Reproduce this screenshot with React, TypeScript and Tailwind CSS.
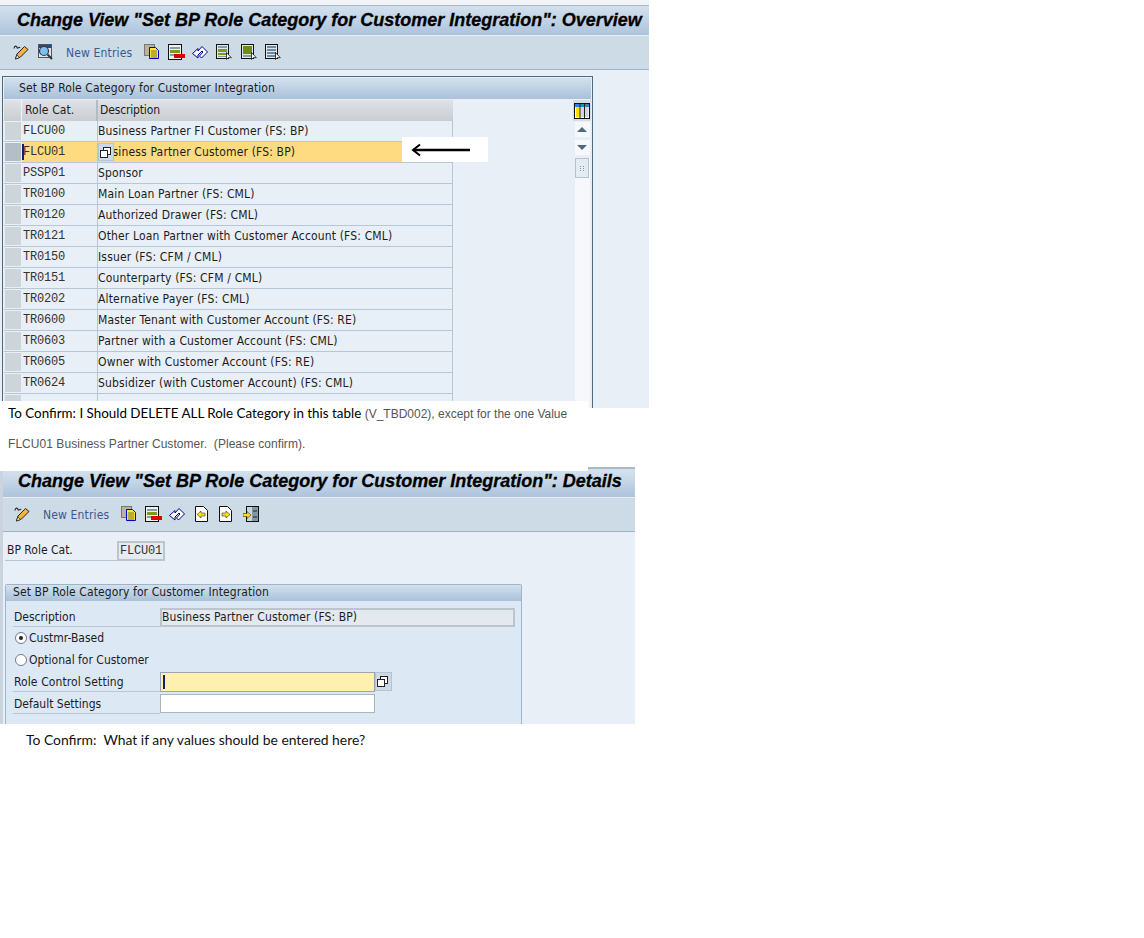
import React from "react";

const UI = "font-['DejaVu_Sans_Condensed','DejaVu_Sans',sans-serif]";

const rows = [
  ["FLCU00", "Business Partner FI Customer (FS: BP)"],
  ["FLCU01", "Business Partner Customer (FS: BP)"],
  ["PSSP01", "Sponsor"],
  ["TR0100", "Main Loan Partner (FS: CML)"],
  ["TR0120", "Authorized Drawer (FS: CML)"],
  ["TR0121", "Other Loan Partner with Customer Account (FS: CML)"],
  ["TR0150", "Issuer (FS: CFM / CML)"],
  ["TR0151", "Counterparty (FS: CFM / CML)"],
  ["TR0202", "Alternative Payer (FS: CML)"],
  ["TR0600", "Master Tenant with Customer Account (FS: RE)"],
  ["TR0603", "Partner with a Customer Account (FS: CML)"],
  ["TR0605", "Owner with Customer Account (FS: RE)"],
  ["TR0624", "Subsidizer (with Customer Account) (FS: CML)"],
  ["", ""],
];

function Svg({ w = 16, h = 16, children }: { w?: number; h?: number; children: React.ReactNode }) {
  return (
    <svg width={w} height={h} viewBox={`0 0 ${w} ${h}`} className="block shrink-0">
      {children}
    </svg>
  );
}

function PencilIcon() {
  return (
    <Svg>
      <path d="M1 4.500c.5-3 2.500-3 3-1s2-1.500 3 .5" fill="none" stroke="#333" strokeWidth="1.200" />
      <path d="M2.500 15l1.500-5L11.500 2.500l3.500 3L7.500 13z" fill="#f5b53a" stroke="#222" strokeWidth="1" />
      <path d="M2.500 15l1.200-4 2.800 2.500z" fill="#fff" stroke="#222" strokeWidth=".8" />
    </Svg>
  );
}

function MagnifierIcon() {
  return (
    <Svg>
      <rect x="1.500" y="0.500" width="13" height="13" fill="#dfe7ee" stroke="#555" />
      <rect x="2" y="1" width="12" height="3" fill="#16518f" />
      <circle cx="7" cy="7" r="4.500" fill="#7cc0f0" stroke="#334" strokeWidth="1.200" />
      <path d="M10.500 10.500l4.500 4.500" stroke="#333" strokeWidth="2" />
    </Svg>
  );
}

function CopyIcon() {
  return (
    <Svg>
      <rect x="0.500" y="0.500" width="10" height="11" fill="#b8b49c" stroke="#777" />
      <path d="M5.500 3.500h6l3 3v8h-9z" fill="#ffe23a" stroke="#0000c8" />
      <path d="M7 7h6M7 9h6M7 11h6M7 13h6" stroke="#7a7a20" />
    </Svg>
  );
}

function DeleteIcon() {
  return (
    <Svg w={17}>
      <rect x="0.500" y="0.500" width="13" height="15" fill="#eef2f5" stroke="#111" />
      <rect x="2" y="3" width="10" height="2" fill="#8a9aa6" />
      <rect x="2" y="6" width="10" height="3" fill="#7c9a1e" />
      <rect x="2" y="10" width="10" height="2" fill="#8a9aa6" />
      <rect x="6" y="10" width="11" height="4" fill="#e00000" />
    </Svg>
  );
}

function UndoIcon() {
  return (
    <Svg>
      <path d="M.5 9.500L6 4.500V7L10 2.500 15.500 8 9.500 14 7.500 12 11 8 10 7 6 11v3z" fill="#fff" stroke="#00008c" strokeWidth="1" strokeLinejoin="miter" />
    </Svg>
  );
}

function SelectIcon({ kind }: { kind: "block" | "all" | "none" }) {
  return (
    <Svg>
      <rect x="0.500" y="0.500" width="12" height="14" fill="#dfe8ee" stroke="#111" />
      {kind === "block" && (
        <>
          <rect x="2" y="2" width="9" height="2" fill="#8a9aa6" />
          <rect x="2" y="5" width="9" height="3" fill="#7d9a1a" />
          <rect x="2" y="9" width="9" height="2" fill="#7d9a1a" />
          <rect x="2" y="12" width="9" height="1" fill="#8a9aa6" />
        </>
      )}
      {kind === "all" && <rect x="2" y="2" width="9" height="8" fill="#6f8d12" />}
      {kind === "all" && <rect x="2" y="11" width="9" height="2" fill="#8a9aa6" />}
      {kind === "none" && (
        <>
          <rect x="2" y="2" width="9" height="2" fill="#6b8aa0" />
          <rect x="2" y="5" width="9" height="2" fill="#6b8aa0" />
          <rect x="2" y="8" width="9" height="2" fill="#6b8aa0" />
          <rect x="2" y="11" width="9" height="2" fill="#6b8aa0" />
        </>
      )}
      <path d="M10.500 8.500v7l1.800-1.800h3z" fill="#fff" stroke="#111" strokeWidth=".8" />
    </Svg>
  );
}

function PageArrowIcon({ dir }: { dir: "left" | "right" }) {
  return (
    <Svg w={13}>
      <path d="M.5.500h8l4 4v11H.5z" fill="#fff" stroke="#111" />
      {dir === "left" ? (
        <path d="M2 8.500l4-3.500v2h4v3H6v2z" fill="#ffe000" stroke="#333" strokeWidth=".6" />
      ) : (
        <path d="M11 8.500L7 5v2H3v3h4v2z" fill="#ffe000" stroke="#333" strokeWidth=".6" />
      )}
    </Svg>
  );
}

function OtherIcon() {
  return (
    <Svg>
      <rect x="3.500" y="0.500" width="12" height="15" fill="#c9d6de" stroke="#111" />
      <rect x="9" y="1" width="6" height="14" fill="#8496a3" />
      <path d="M10 5h4M10 11h4" stroke="#222" />
      <path d="M0 7.500h4v-2l4 3.500-4 3.500v-2H0z" fill="#ffe000" stroke="#333" strokeWidth=".6" />
    </Svg>
  );
}

function F4Button({ className }: { className: string }) {
  return (
    <div className={`flex items-center justify-center pr-[2px] bg-[#cdd9e6] border border-[#b6c3d0] ${className}`}>
      <svg width="11" height="11" viewBox="0 0 11 11" className="block">
        <rect x="3.500" y="0.500" width="7" height="7" fill="#fff" stroke="#222" />
        <rect x="0.500" y="3.500" width="7" height="7" fill="#fff" stroke="#222" />
      </svg>
    </div>
  );
}

function TitleText({ children, className }: { children: React.ReactNode; className: string }) {
  return (
    <span className={`font-['Liberation_Sans',sans-serif] font-bold italic text-[18px] text-black whitespace-pre leading-none [-webkit-text-stroke:0.3px_black] ${className}`}>
      {children}
    </span>
  );
}

function NewEntries() {
  return <span className={`${UI} text-[12px] text-[#3a5a8c] whitespace-pre tracking-[0.15px]`}>New Entries</span>;
}

function OverviewTable() {
  return (
    <div className="w-[449px]">
      <div className="flex h-[21px] bg-gradient-to-b from-[#dfe2e6] to-[#c9cdd2] text-[12px] text-[#1c1c1c]">
        <div className="w-[18px] border-r border-[#f2f4f6]" />
        <div className="w-[76px] border-r-2 border-[#b4bbc3] pl-[3px] leading-[20px] tracking-[0.1px]">Role Cat.</div>
        <div className="flex-1 pl-[2px] leading-[20px] tracking-[-0.15px]">Description</div>
      </div>
      {rows.map(([code, desc], i) => {
        const on = i === 1;
        return (
          <div key={i} className="flex h-[21px] border-b border-[#b9c6d6] text-[12px] text-[#1c1c1c] leading-[21px]">
            <div className={`w-[18px] border border-[#e9eff6] ${on ? "bg-[#b4bec8]" : "bg-[#cdd4da]"}`} />
            <div className={`w-[76px] border-r border-[#b9c6d6] pl-[1px] font-['Liberation_Mono',monospace] text-[12px] tracking-[-0.2px] text-[#333] relative ${on ? "bg-[#fedb80]" : "bg-[#e9eff6]"}`}>
              {on && <span className="absolute left-0 top-[2px] w-[2px] h-[16px] bg-[#10206a]" />}
              {code}
            </div>
            <div className={`flex-1 relative whitespace-pre tracking-[0.16px] border-r border-[#b9c6d6] ${on ? "bg-[#fedb80]" : "bg-[#e9eff6]"}`}>
              {on && <F4Button className="absolute left-0 top-[1px] w-[16px] h-[18px]" />}
              {desc}
            </div>
          </div>
        );
      })}
    </div>
  );
}

function Scrollbar() {
  return (
    <div className="w-[18px] flex flex-col items-center">
      <div className="w-[18px] h-[21px] bg-[#d5dce3] flex items-center justify-center">
        <svg width="16" height="16" viewBox="0 0 16 16" className="block">
          <rect x="0.500" y="0.500" width="15" height="15" fill="#fff" stroke="#111" />
          <rect x="1" y="1" width="14" height="3" fill="#2a86d8" />
          <rect x="2" y="4" width="4" height="10" fill="#ffe000" />
          <rect x="6.500" y="4" width="4" height="10" fill="#cfd8df" />
          <rect x="11" y="4" width="3.500" height="10" fill="#cfd8df" />
          <path d="M6 1v14M10.500 1v14" stroke="#222" />
        </svg>
      </div>
      <div className="w-[15px] flex-1 bg-[#f6f8fb] flex flex-col items-center mt-[1px]">
        <div className="h-[15px] flex items-center"><div className="w-0 h-0 border-x-[5px] border-x-transparent border-b-[5px] border-b-[#4e6a80]" /></div>
        <div className="h-[3px] w-full bg-[#e9eff6]" />
        <div className="h-[15px] flex items-center"><div className="w-0 h-0 border-x-[5px] border-x-transparent border-t-[5px] border-t-[#4e6a80]" /></div>
        <div className="h-[3px] w-full bg-[#e9eff6]" />
        <div className="w-[14px] h-[20px] bg-[#e3ebf3] border border-[#b6c2ce] flex items-center justify-center">
          <div className="grid grid-cols-2 gap-x-[2px] gap-y-[1px]">
            {[0, 1, 2, 3, 4, 5].map((k) => <div key={k} className="w-[1px] h-[1px] bg-[#8899aa]" />)}
          </div>
        </div>
      </div>
    </div>
  );
}

export default function App() {
  return (
    <div className={`${UI} w-[1144px] h-[938px] bg-white overflow-hidden`}>
      {/* First screen */}
      <div className="w-[649px] h-[408px] overflow-hidden bg-[#e9eff6] relative">
        <div className="h-[6px] bg-[#f0f3f7] border-b border-[#a9b6c4]" />
        <div className="h-[30px] bg-gradient-to-b from-[#d3e1ee] to-[#adc4dc] border-b border-[#e6eef5] flex items-center pb-[2px]">
          <TitleText className="ml-[17px]">Change View "Set BP Role Category for Customer Integration": Overview</TitleText>
        </div>
        <div className="h-[34px] bg-[#cddbe7] border-b border-[#a3b2c0] flex items-center pl-[13px] pb-[2px]">
          <PencilIcon />
          <div className="ml-[8px]"><MagnifierIcon /></div>
          <div className="ml-[13px]"><NewEntries /></div>
          <div className="ml-[12px]"><CopyIcon /></div>
          <div className="ml-[8px]"><DeleteIcon /></div>
          <div className="ml-[7px]"><UndoIcon /></div>
          <div className="ml-[8px]"><SelectIcon kind="block" /></div>
          <div className="ml-[9px]"><SelectIcon kind="all" /></div>
          <div className="ml-[8px]"><SelectIcon kind="none" /></div>
        </div>
        <div className="ml-[2px] mt-[6px] w-[591px] h-[400px] border border-[#4e6a80] p-[1px] flex flex-col">
          <div className="h-[21px] shrink-0 bg-gradient-to-b from-[#d3e1ee] to-[#a9c1d9] pl-[15px] text-[12px] leading-[20px] text-[#1c1c1c] tracking-[0.1px]">
            Set BP Role Category for Customer Integration
          </div>
          <div className="flex flex-1 justify-between mt-[1px]">
            <OverviewTable />
            <Scrollbar />
          </div>
        </div>
        <div className="absolute left-[402px] top-[137px] w-[86px] h-[25px] bg-white flex items-center pl-[9px]">
          <svg width="60" height="14" viewBox="0 0 60 14" className="block">
            <path d="M2 7h57" stroke="#000" strokeWidth="2.500" />
            <path d="M9 1.500L2 7l7 5.500" fill="none" stroke="#000" strokeWidth="2" />
          </svg>
        </div>
      </div>

      {/* Notes */}
      <div className="relative z-10 -mt-[7px] w-[588px] h-[70px] bg-white">
        <div className="pl-[8px] pt-[3px] h-[27px] text-[13.400px] text-black font-['Lato',sans-serif] whitespace-pre leading-[18px] flex items-baseline">
          <span>To Confirm: I Should DELETE ALL Role Category in this table </span>
          <span className="font-['Liberation_Sans',sans-serif] text-[12px] text-[#555]">(V_TBD002), except for the one Value</span>
        </div>
        <div className="pl-[8px] mt-[7px] text-[12px] leading-[18px] text-[#555] font-['Liberation_Sans',sans-serif] whitespace-pre tracking-[0.05px]">
          FLCU01 Business Partner Customer.  (Please confirm).
        </div>
      </div>

      {/* Second screen */}
      <div className="-mt-[4px] w-[635px] h-[257px] bg-[#e9eff6] border-l-[3px] border-l-[#c9d4df] overflow-hidden">
        <div className="h-[2px] bg-[#aab8c8]" />
        <div className="h-[2px] bg-[#d3e1ee]" />
        <div className="h-[27px] bg-gradient-to-b from-[#d3e1ee] to-[#adc4dc] border-b border-[#e6eef5] flex items-center pb-[6px]">
          <TitleText className="ml-[15px]">Change View "Set BP Role Category for Customer Integration": Details</TitleText>
        </div>
        <div className="h-[34px] bg-[#cddbe7] border-b border-[#a3b2c0] flex items-center pl-[11px] pb-[2px]">
          <PencilIcon />
          <div className="ml-[13px]"><NewEntries /></div>
          <div className="ml-[12px]"><CopyIcon /></div>
          <div className="ml-[8px]"><DeleteIcon /></div>
          <div className="ml-[7px]"><UndoIcon /></div>
          <div className="ml-[10px]"><PageArrowIcon dir="left" /></div>
          <div className="ml-[11px]"><PageArrowIcon dir="right" /></div>
          <div className="ml-[11px]"><OtherIcon /></div>
        </div>
        <div className="flex items-center h-[20px] mt-[9px] ml-[2px]">
          <div className="w-[112px] h-[20px] border-b border-[#b9c6d6] text-[12px] leading-[18px] text-[#1c1c1c] pl-[2px]">BP Role Cat.</div>
          <div className="w-[48px] h-[20px] border-2 border-[#bcc4cc] bg-[#e6ecf2] text-[12px] tracking-[-0.2px] leading-[16px] font-['Liberation_Mono',monospace] text-[#333] pl-[1px]">FLCU01</div>
        </div>
        <div className="ml-[2px] mt-[23px] w-[517px] h-[140px] bg-[#dce8f4] border border-b-0 border-[#9db4cb] rounded-t-[2px]">
          <div className="h-[16px] bg-gradient-to-b from-[#d3e1ee] to-[#a9c1d9] pl-[7px] text-[12px] leading-[15px] text-[#1c1c1c] tracking-[0.1px]">
            Set BP Role Category for Customer Integration
          </div>
          <div className="pl-[7px] text-[12px] text-[#1c1c1c]">
            <div className="flex h-[22px] items-end mt-[4px]">
              <div className="w-[147px] h-[19px] border-b border-[#b9c6d6] pl-[1px] leading-[18px]">Description</div>
              <div className="w-[355px] h-[19px] bg-[#e3e9ef] border-2 border-[#bcc4cc] leading-[15px] tracking-[0.1px]">Business Partner Customer (FS: BP)</div>
            </div>
            <div className="flex items-center h-[22px] gap-[2px] pl-[2px]">
              <div className="w-[12px] h-[12px] rounded-full bg-white border border-[#6f7d8a] flex items-center justify-center">
                <div className="w-[4px] h-[4px] rounded-full bg-[#222]" />
              </div>
              Custmr-Based
            </div>
            <div className="flex items-center h-[22px] gap-[2px] pl-[2px]">
              <div className="w-[12px] h-[12px] rounded-full bg-white border border-[#6f7d8a]" />
              Optional for Customer
            </div>
            <div className="flex h-[22px] pt-[1px]">
              <div className="w-[147px] h-[20px] border-b border-[#b9c6d6] pl-[1px] leading-[21px] tracking-[0.1px]">Role Control Setting</div>
              <div className="relative w-[215px] h-[20px] bg-[#fff0b0] border border-[#9aa5b0]">
                <span className="absolute left-[2px] top-[2px] w-[2px] h-[14px] bg-[#10206a]" />
              </div>
              <F4Button className="w-[17px] h-[19px]" />
            </div>
            <div className="flex h-[22px] pt-[1px]">
              <div className="w-[147px] h-[20px] border-b border-[#b9c6d6] pl-[1px] leading-[21px]">Default Settings</div>
              <div className="w-[215px] h-[19px] bg-white border border-[#aab6c2]" />
            </div>
          </div>
        </div>
      </div>

      <div className="mt-[7px] pl-[26px] text-[13.900px] leading-[18px] text-[#111] font-['Lato',sans-serif] whitespace-pre">
        To Confirm:  What if any values should be entered here?
      </div>
    </div>
  );
}
